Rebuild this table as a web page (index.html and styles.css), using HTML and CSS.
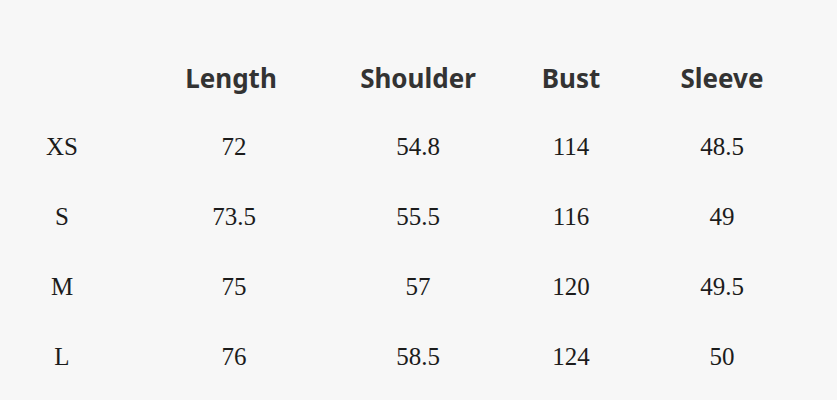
FILE: index.html
```html
<!DOCTYPE html>
<html>
<head>
<meta charset="utf-8">
<link rel="stylesheet" href="styles.css">
</head>
<body>
<div class="table">
  <div class="cell head"></div>
  <div class="cell head">Length</div>
  <div class="cell head">Shoulder</div>
  <div class="cell head">Bust</div>
  <div class="cell head">Sleeve</div>

  <div class="cell">XS</div>
  <div class="cell len">72</div>
  <div class="cell">54.8</div>
  <div class="cell">114</div>
  <div class="cell">48.5</div>

  <div class="cell">S</div>
  <div class="cell len">73.5</div>
  <div class="cell">55.5</div>
  <div class="cell">116</div>
  <div class="cell">49</div>

  <div class="cell">M</div>
  <div class="cell len">75</div>
  <div class="cell">57</div>
  <div class="cell">120</div>
  <div class="cell">49.5</div>

  <div class="cell">L</div>
  <div class="cell len">76</div>
  <div class="cell">58.5</div>
  <div class="cell">124</div>
  <div class="cell">50</div>
</div>
</body>
</html>
```
FILE: styles.css
```css
html, body {
  margin: 0;
  padding: 0;
  background: #f7f7f7;
}
body {
  width: 837px;
  height: 400px;
  overflow: hidden;
}
.table {
  display: grid;
  grid-template-columns: 124px 214px 160px 146px 156px;
  grid-auto-rows: 70px;
  padding-top: 43px;
}
.cell {
  display: flex;
  align-items: center;
  justify-content: center;
  padding-bottom: 3px;
  font-family: "Liberation Serif", "Times New Roman", serif;
  font-size: 25px;
  color: #1c1c1c;
}
.cell.len {
  padding-left: 6px;
}
.cell.head {
  padding-bottom: 0;
  font-family: "Noto Sans", "Open Sans", sans-serif;
  font-weight: 700;
  font-size: 26px;
  color: #333333;
}
```
